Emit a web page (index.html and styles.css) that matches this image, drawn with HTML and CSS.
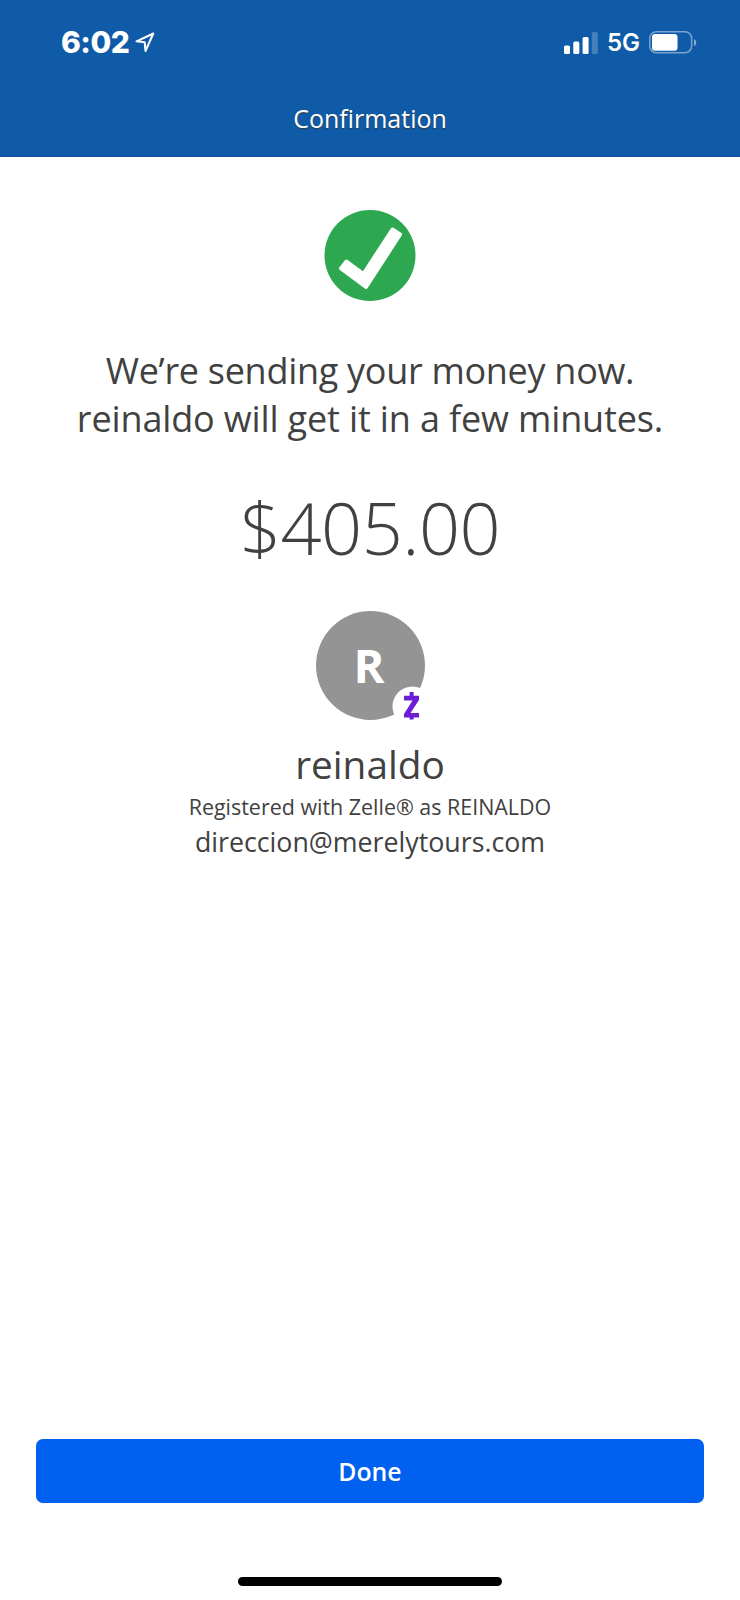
FILE: index.html
```html
<!DOCTYPE html>
<html lang="en">
<head>
<meta charset="utf-8">
<title>Confirmation</title>
<link rel="stylesheet" href="styles.css">
</head>
<body>
<div class="screen">
  <header class="header">
    <div class="status">
      <div class="status-left">
        <span class="time">6:02</span>
        <svg class="location" width="20" height="22" viewBox="0 0 20 22"><path d="M1.500 10.300 18.300 2.500l-7.800 17.500-.8-8.700z" fill="none" stroke="#fff" stroke-width="2" stroke-linejoin="round"/></svg>
      </div>
      <div class="status-right">
        <svg class="signal" width="34" height="22" viewBox="0 0 34 22" fill="#fff"><rect x="0" y="13.500" width="6" height="8.500" rx="1.500"/><rect x="9.300" y="9.500" width="6" height="12.500" rx="1.500"/><rect x="18.600" y="5" width="6" height="17" rx="1.500"/><rect x="27.800" y="0" width="6" height="22" rx="1.500" opacity=".22"/></svg>
        <span class="network">5G</span>
        <svg class="battery" width="48" height="23" viewBox="0 0 48 23"><rect x=".8" y=".8" width="41.800" height="21" rx="6.500" fill="none" stroke="#fff" stroke-opacity=".45" stroke-width="1.500"/><rect x="3" y="3" width="25.500" height="16.700" rx="3" fill="#fff"/><path d="M45 8q2.300 1 2.300 3.500T45 15z" fill="#fff" opacity=".5"/></svg>
      </div>
    </div>
    <h1 class="title">Confirmation</h1>
  </header>
  <main class="content">
    <svg class="check" width="92" height="92" viewBox="0 0 92 92"><circle cx="46" cy="46.500" r="45.500" fill="#2da850"/><path d="M17 59.500 22.500 52.500 39.500 65 68.500 20.500 76 25.500 42 78z" fill="#fff" stroke="#fff" stroke-width="4" stroke-linejoin="round"/></svg>
    <p class="message"><span class="line-one">We’re sending your money now.</span><br>reinaldo will get it in a few minutes.</p>
    <p class="amount">$405.00</p>
    <div class="avatar">
      <span class="initial">R</span>
      <svg class="badge" width="41" height="41" viewBox="0 0 41 41"><circle cx="20.500" cy="20.500" r="20" fill="#fff"/><path d="M12 9.800H27V14L18.500 27H27V31.500H12V28L20.500 14.500H12zM17.600 6h4v5h-4zM17.600 30h4v3.500h-4z" fill="#6d1ed4"/></svg>
    </div>
    <p class="name">reinaldo</p>
    <p class="registered">Registered with Zelle® as REINALDO</p>
    <p class="email">direccion@merelytours.com</p>
  </main>
  <footer class="footer">
    <button class="done" type="button">Done</button>
    <div class="home-indicator"></div>
  </footer>
</div>
</body>
</html>
```

FILE: styles.css
```css
* { box-sizing: border-box; }
body { margin: 0; background: #fff; font-family: "Open Sans", sans-serif; color: #414141; }
p, h1 { margin: 0; font-weight: 400; white-space: nowrap; }
svg { display: block; flex: none; }
.screen { width: 740px; height: 1600px; display: flex; flex-direction: column; background: #fff; overflow: hidden; }
.header { height: 157px; background: #105ba7; border-bottom: 1px solid #0d4f95; color: #fff; text-align: center; }
.status { height: 84px; padding: 0 43px 0 61px; display: flex; justify-content: space-between; align-items: center; font-family: Inter, sans-serif; }
.status-left, .status-right { display: flex; align-items: center; }
.time { font-size: 30px; font-weight: 800; line-height: 40px; letter-spacing: -.5px; }
.location { margin-left: 6px; }
.network { font-size: 24px; font-weight: 600; line-height: 40px; margin: 2px 9px 0 9px; }
.signal { margin-top: 2px; }
.title { margin-top: 16px; font-size: 25px; line-height: 36px; text-shadow: 0 1px 1px rgba(60, 50, 40, .8); }
.content { flex: 1; display: flex; flex-direction: column; align-items: center; text-align: center; }
.check { margin-top: 52px; }
.message { margin-top: 46px; font-size: 36px; line-height: 48px; letter-spacing: -.14px; }
.line-one { letter-spacing: -.29px; }
.amount { margin-top: 35px; font-size: 72px; font-weight: 300; line-height: 98px; letter-spacing: -.5px; }
.avatar { position: relative; margin-top: 34.500px; width: 109px; height: 109px; border-radius: 50%; background: #949494; }
.initial { display: block; margin-left: -2px; font-size: 47px; font-weight: 700; line-height: 109px; color: #fff; }
.badge { position: absolute; left: 76px; top: 75.500px; }
.name { margin-top: 17.500px; font-size: 38.800px; line-height: 54px; }
.registered { margin-top: 1px; font-size: 21.450px; line-height: 30px; }
.email { margin-top: 1px; font-size: 26.750px; line-height: 38px; }
.footer { height: 161px; display: flex; flex-direction: column; align-items: center; }
.done { width: 668px; height: 64px; border: 0; padding: 1px 0 0; border-radius: 7px; background: #0060f0; color: #fff; font: 600 24.800px/63px "Open Sans", sans-serif; }
.home-indicator { margin-top: 74px; width: 264px; height: 9px; border-radius: 5px; background: #000; }
```
